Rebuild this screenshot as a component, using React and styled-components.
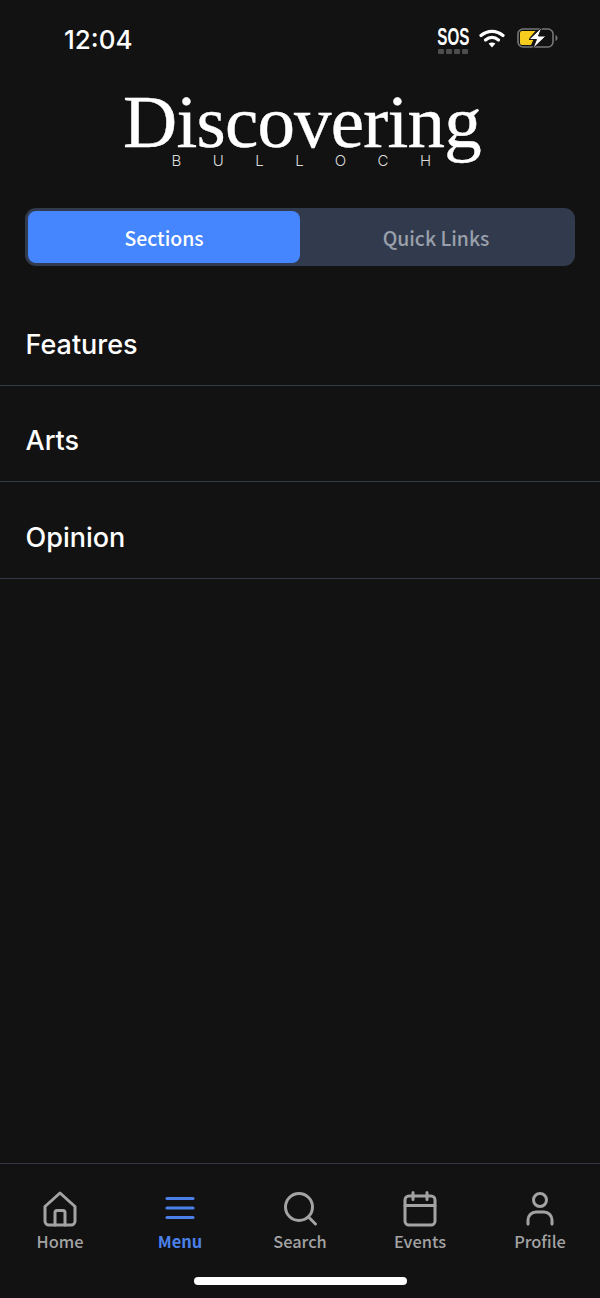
import React from "react";
import styled, { createGlobalStyle } from "styled-components";

const GlobalStyle = createGlobalStyle`
  html, body {
    margin: 0;
    padding: 0;
    background: #121213;
  }
  * { box-sizing: border-box; }
`;

const Screen = styled.div`
  width: 600px;
  height: 1298px;
  display: flex;
  flex-direction: column;
  background: #121213;
  color: #fff;
  font-family: "Noto Sans CJK JP", "Noto Sans", sans-serif;
  overflow: hidden;
`;

const StatusBar = styled.div`
  height: 80px;
  padding: 22px 41px 0 64px;
  display: flex;
  justify-content: space-between;
  align-items: flex-start;
`;

const Time = styled.div`
  font-family: "Inter", sans-serif;
  font-size: 26px;
  line-height: 36px;
  font-weight: 500;
`;

const StatusIcons = styled.div`
  display: flex;
  align-items: flex-start;
  gap: 12px;
  padding-top: 5px;
`;

const Sos = styled.div`
  width: 32px;
  margin-right: -2px;
  display: flex;
  flex-direction: column;
  align-items: center;
  font-family: "Liberation Sans", sans-serif;
  font-size: 23px;
  line-height: 21px;
  font-weight: 700;
`;

const SosText = styled.span`
  display: block;
  transform: scaleX(0.66);
`;

const SosDots = styled.div`
  display: flex;
  gap: 2px;
  margin-top: 1px;
`;

const SosDot = styled.span`
  width: 6px;
  height: 5px;
  background: #4d4d4e;
  border-radius: 1px;
`;

const Logo = styled.div`
  height: 128px;
  display: flex;
  flex-direction: column;
  align-items: center;
`;

const LogoTitle = styled.div`
  font-family: "Liberation Serif", serif;
  font-size: 75px;
  line-height: 84px;
  letter-spacing: -0.8px;
  margin-left: 4px;
  color: #fff;
  -webkit-text-stroke: 0.4px #fff;
`;

const LogoSub = styled.div`
  margin-top: -10px;
  margin-left: 34px;
  font-family: "Inter", sans-serif;
  font-size: 15px;
  line-height: 14px;
  font-weight: 300;
  letter-spacing: 31.5px;
  color: #ddd;
`;

const Segmented = styled.div`
  margin: 0 25px;
  height: 58px;
  padding: 3px;
  display: flex;
  background: #323b4e;
  border-radius: 11px;
`;

const Segment = styled.div`
  width: ${(p) => (p.$active ? "272px" : "auto")};
  flex: ${(p) => (p.$active ? "none" : 1)};
  display: flex;
  align-items: center;
  justify-content: center;
  background: ${(p) => (p.$active ? "#4585fe" : "transparent")};
  border-radius: 8px;
  color: ${(p) => (p.$active ? "#fff" : "#99a0ab")};
  font-size: 19.4px;
  font-weight: 500;
`;

const SectionList = styled.div`
  margin-top: 23px;
  flex: 1;
`;

const SectionRow = styled.div`
  height: 96.5px;
  padding: 15px 0 0 25.5px;
  display: flex;
  align-items: center;
  border-bottom: 1.5px solid #33384a;
  font-family: "Inter", sans-serif;
  font-size: 27px;
  font-weight: 500;
`;

const TabBar = styled.nav`
  height: 135px;
  border-top: 1.5px solid #33363f;
  position: relative;
  display: grid;
  grid-template-columns: repeat(5, 1fr);
  padding-top: 27px;
`;

const TabItem = styled.div`
  display: flex;
  flex-direction: column;
  align-items: center;
  color: ${(p) => (p.$active ? "#4a80e8" : "#a3a3a3")};
  font-size: 16.4px;
  font-weight: ${(p) => (p.$active ? 700 : 500)};
  line-height: 24px;
`;

const TabIcon = styled.svg`
  width: 40px;
  height: 40px;
  margin-bottom: -2px;
`;

const HomeIndicator = styled.div`
  position: absolute;
  left: 194px;
  bottom: 13px;
  width: 213px;
  height: 8px;
  border-radius: 4px;
  background: #fff;
`;

const line = { fill: "none", stroke: "currentColor", strokeWidth: 3, strokeLinecap: "round", strokeLinejoin: "round" };

const tabs = [
  {
    label: "Home",
    icon: (
      <g {...line}>
        <path d="M5 15.500 20 2l15 13.500V30a4 4 0 0 1-4 4H9a4 4 0 0 1-4-4Z" />
        <path d="M15 34V21.500a2 2 0 0 1 2-2h6a2 2 0 0 1 2 2V34" />
      </g>
    ),
  },
  {
    label: "Menu",
    active: true,
    icon: (
      <g {...line} strokeWidth={3.2}>
        <path d="M7 7.500h26M7 17h26M7 26.500h26" />
      </g>
    ),
  },
  {
    label: "Search",
    icon: (
      <g {...line}>
        <circle cx="19" cy="16" r="13.500" />
        <path d="m29 26.500 6.500 6.500" />
      </g>
    ),
  },
  {
    label: "Events",
    icon: (
      <g {...line}>
        <rect x="5" y="5" width="30" height="29" rx="4" />
        <path d="M5 14.500h30M13 1.500v7M27 1.500v7" />
      </g>
    ),
  },
  {
    label: "Profile",
    icon: (
      <g {...line}>
        <circle cx="20" cy="9" r="6.500" />
        <path d="M8 33v-4a8 8 0 0 1 8-8h8a8 8 0 0 1 8 8v4" />
      </g>
    ),
  },
];

const App = () => {
  return (
    <>
      <GlobalStyle />
      <Screen>
        <StatusBar>
          <Time>12:04</Time>
          <StatusIcons>
            <Sos>
              <SosText>SOS</SosText>
              <SosDots>
                <SosDot />
                <SosDot />
                <SosDot />
                <SosDot />
              </SosDots>
            </Sos>
            <svg width="26" height="22" viewBox="0 0 26 22">
              <g fill="none" stroke="#fff" strokeWidth="3.2" strokeLinecap="round">
                <path d="M2 8.500c6.500-5.600 15.500-5.600 22 0" />
                <path d="M6.500 13c4-3.400 9-3.400 13 0" />
              </g>
              <path d="M13 20.500 9.600 16.600c2-1.600 4.800-1.600 6.800 0Z" fill="#fff" />
            </svg>
            <svg width="42" height="22" viewBox="0 0 42 22">
              <rect x="1" y="2" width="35" height="18" rx="5" fill="none" stroke="#77777a" strokeWidth="1.600" />
              <path d="M5 4h13.500l-6.500 7.500h5L14 18H5a2 2 0 0 1-2-2V6a2 2 0 0 1 2-2Z" fill="#f7ce1e" />
              <path d="M25 0 12 12.500H19.500L15.500 22 29 9H21.500Z" fill="#fff" stroke="#121213" strokeWidth="1" />
              <path d="M38.500 8v6c1.400-.5 2-1.700 2-3s-.6-2.500-2-3Z" fill="#77777a" />
            </svg>
          </StatusIcons>
        </StatusBar>
        <Logo>
          <LogoTitle>Discovering</LogoTitle>
          <LogoSub>BULLOCH</LogoSub>
        </Logo>
        <Segmented>
          <Segment $active>Sections</Segment>
          <Segment>Quick Links</Segment>
        </Segmented>
        <SectionList>
          <SectionRow>Features</SectionRow>
          <SectionRow>Arts</SectionRow>
          <SectionRow>Opinion</SectionRow>
        </SectionList>
        <TabBar>
          {tabs.map((tab) => (
            <TabItem key={tab.label} $active={tab.active}>
              <TabIcon viewBox="0 0 40 40">{tab.icon}</TabIcon>
              {tab.label}
            </TabItem>
          ))}
          <HomeIndicator />
        </TabBar>
      </Screen>
    </>
  );
};

export default App;
